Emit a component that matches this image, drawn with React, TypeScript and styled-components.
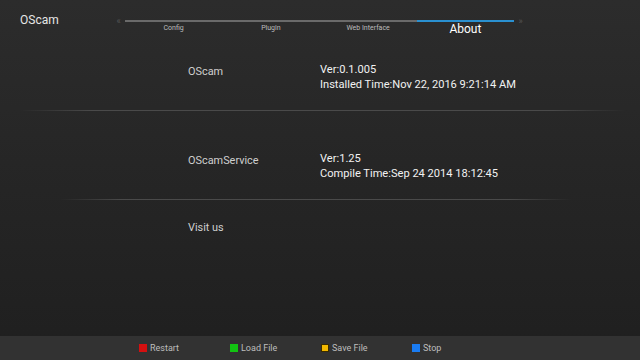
import React from "react";
import styled, { createGlobalStyle } from "styled-components";

const GlobalStyle = createGlobalStyle`
  html, body, #root {
    margin: 0;
    padding: 0;
    width: 640px;
    height: 360px;
    overflow: hidden;
  }
  body {
    font-family: Roboto, "Liberation Sans", sans-serif;
    background: #242424;
  }
`;

const Screen = styled.div`
  width: 640px;
  height: 360px;
  display: flex;
  flex-direction: column;
  background: linear-gradient(180deg, #2c2c2c 0%, #262626 45%, #1f1f1f 100%);
  color: #e8e8e8;
`;

const Header = styled.div`
  height: 50px;
  display: flex;
  align-items: flex-start;
`;

const Title = styled.div`
  width: 112px;
  padding: 13px 0 0 20px;
  box-sizing: border-box;
  font-size: 12px;
  color: #e6e6e6;
`;

const TabStrip = styled.div`
  display: flex;
  align-items: flex-start;
  padding-top: 15px;
`;

const Chevron = styled.span`
  width: 13px;
  font-size: 9px;
  line-height: 12px;
  color: #555;
  text-align: center;
`;

const Tabs = styled.div`
  width: 389px;
  display: grid;
  grid-template-columns: repeat(4, 1fr);
`;

const Tab = styled.div<{ $active?: boolean }>`
  display: flex;
  flex-direction: column;
  align-items: center;
  border-top: ${(p) => (p.$active ? "2px solid #2a90d0" : "2px solid #6a6a6a")};
  margin-top: 5px;
  font-size: ${(p) => (p.$active ? "12px" : "7px")};
  color: ${(p) => (p.$active ? "#ffffff" : "#bdbdbd")};
  padding-top: ${(p) => (p.$active ? "0" : "2px")};
  line-height: ${(p) => (p.$active ? "14px" : "9px")};
`;

const Body = styled.div`
  flex: 1;
  display: flex;
  flex-direction: column;
`;

const Row = styled.div<{ $pad: number; $height: number }>`
  height: ${(p) => p.$height}px;
  box-sizing: border-box;
  padding-top: ${(p) => p.$pad}px;
  padding-left: 188px;
  display: grid;
  grid-template-columns: 132px 1fr;
  align-content: start;
`;

const Label = styled.div`
  font-size: 10.9px;
  line-height: 15px;
  color: #cfcfcf;
  padding-top: 2px;
`;

const Values = styled.div`
  display: flex;
  flex-direction: column;
  font-size: 11.1px;
  line-height: 15px;
  color: #f2f2f2;
`;

const Divider = styled.div<{ $from: number; $to: number }>`
  height: 1px;
  margin-left: ${(p) => p.$from}px;
  width: ${(p) => p.$to - p.$from}px;
  background: linear-gradient(90deg, rgba(80, 80, 80, 0) 0%, #4a4a4a 12%, #4a4a4a 88%, rgba(80, 80, 80, 0) 100%);
`;

const Footer = styled.div`
  height: 24px;
  background: #323232;
  display: grid;
  grid-template-columns: repeat(4, 91px);
  padding-left: 139px;
  align-items: center;
`;

const Key = styled.div`
  display: flex;
  align-items: center;
  gap: 3px;
  font-size: 9px;
  color: #bdbdbd;
`;

const Swatch = styled.span<{ $color: string; $edge?: string }>`
  width: 8px;
  height: 8px;
  box-sizing: border-box;
  background: ${(p) => p.$color};
  border: 1px solid ${(p) => p.$edge ?? p.$color};
`;

const tabs = ["Config", "Plugin", "Web Interface", "About"];

const keys = [
  { label: "Restart", color: "#d41010" },
  { label: "Load File", color: "#12c412" },
  { label: "Save File", color: "#f2b800", edge: "#3a2c00" },
  { label: "Stop", color: "#1a7cf2" },
];

export default function App() {
  return (
    <Screen>
      <GlobalStyle />
      <Header>
        <Title>OScam</Title>
        <TabStrip>
          <Chevron>«</Chevron>
          <Tabs>
            {tabs.map((t) => (
              <Tab key={t} $active={t === "About"}>
                {t}
              </Tab>
            ))}
          </Tabs>
          <Chevron>»</Chevron>
        </TabStrip>
      </Header>
      <Body>
        <Row $height={60} $pad={12}>
          <Label>OScam</Label>
          <Values>
            <span>Ver:0.1.005</span>
            <span>Installed Time:Nov 22, 2016 9:21:14 AM</span>
          </Values>
        </Row>
        <Divider $from={20} $to={625} />
        <Row $height={88} $pad={40}>
          <Label>OScamService</Label>
          <Values>
            <span>Ver:1.25</span>
            <span>Compile Time:Sep 24 2014 18:12:45</span>
          </Values>
        </Row>
        <Divider $from={60} $to={572} />
        <Row $height={136} $pad={18}>
          <Label>Visit us</Label>
        </Row>
      </Body>
      <Footer>
        {keys.map((k) => (
          <Key key={k.label}>
            <Swatch $color={k.color} $edge={k.edge} />
            {k.label}
          </Key>
        ))}
      </Footer>
    </Screen>
  );
}
